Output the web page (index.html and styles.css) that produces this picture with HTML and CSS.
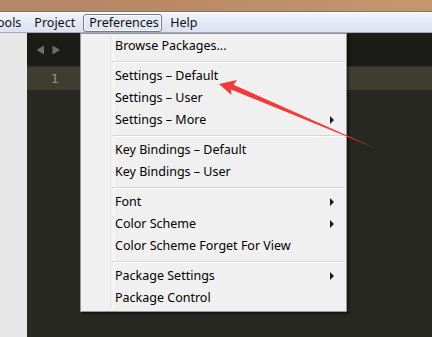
FILE: index.html
```html
<!DOCTYPE html>
<html>
<head>
<meta charset="utf-8">
<link rel="stylesheet" href="styles.css">
</head>
<body>
<div class="app">
  <div class="titlebar"></div>
  <div class="menubar">
    <span class="mitem tools">ools</span>
    <span class="mitem project">Project</span>
    <span class="mitem active">Preferences</span>
    <span class="mitem help">Help</span>
  </div>
  <div class="main">
    <div class="sidebar"></div>
    <div class="editor">
      <div class="tabbar">
        <span class="navarrows">
          <svg width="25" height="10" viewBox="0 0 25 10"><path d="M8 0.5 L0.5 5 L8 9.5 Z" fill="#6d6e67"/><path d="M16.5 0.5 L24 5 L16.5 9.5 Z" fill="#6d6e67"/></svg>
        </span>
      </div>
      <div class="linerow"><span class="lineno">1</span></div>
      <div class="rest"></div>
    </div>
  </div>

  <div class="dropdown">
    <div class="item">Browse Packages...</div>
    <div class="sep"></div>
    <div class="item">Settings – Default</div>
    <div class="item">Settings – User</div>
    <div class="item sub">Settings – More</div>
    <div class="sep"></div>
    <div class="item">Key Bindings – Default</div>
    <div class="item">Key Bindings – User</div>
    <div class="sep"></div>
    <div class="item sub">Font</div>
    <div class="item sub">Color Scheme</div>
    <div class="item">Color Scheme Forget For View</div>
    <div class="sep"></div>
    <div class="item sub">Package Settings</div>
    <div class="item">Package Control</div>
  </div>

  <svg class="annot" width="432" height="337" viewBox="0 0 432 337">
    <path d="M219 84 L237 80 L233.5 84.8 L375 148 L231 89.5 L231.5 95 Z" fill="#f23a36"/>
  </svg>
</div>
</body>
</html>
```
FILE: styles.css
```css
* { box-sizing: border-box; }
html, body { margin: 0; padding: 0; }
body {
  width: 432px;
  height: 337px;
  overflow: hidden;
  font-family: "Noto Sans", "Open Sans", sans-serif;
  font-size: 12.5px;
  color: #000;
}
.app {
  position: relative;
  width: 432px;
  height: 337px;
  display: flex;
  flex-direction: column;
}
.titlebar {
  height: 12px;
  flex: none;
  background: linear-gradient(90deg, #b4866a 0%, #b98a65 40%, #c49771 100%);
  border-bottom: 1px solid #8a6f5c;
}
.menubar {
  height: 21px;
  flex: none;
  display: flex;
  align-items: center;
  border-top: 1px solid #ffffff;
  border-bottom: 1px solid #a3a9b6;
  background: linear-gradient(180deg, #f3f5fb 0%, #e6eaf6 45%, #dbe1f0 100%);
}
.mitem {
  display: flex;
  align-items: center;
  height: 18px;
  line-height: 16px;
  font-size: 12.5px;
  color: #111;
  white-space: nowrap;
}
.mitem.tools { margin-left: -3px; }
.mitem.project { margin-left: 13px; }
.mitem.active {
  border: 1px solid #6f7f90;
  border-radius: 3px;
  background: linear-gradient(180deg, #e9edf5 0%, #dfe4ee 100%);
  box-shadow: inset 0 0 0 1px #f7f9fc;
  padding: 0 5px;
  width: 79px;
  margin-left: 8px;
}
.mitem.help { margin-left: 8px; }
.main {
  flex: 1;
  display: flex;
  min-height: 0;
}
.sidebar {
  width: 27px;
  flex: none;
  background: #e7e7e7;
}
.editor {
  flex: 1;
  display: flex;
  flex-direction: column;
  background: #272822;
}
.tabbar {
  height: 34px;
  flex: none;
  background: #1b1c17;
  border-bottom: 1px solid #2c2d27;
  display: flex;
  align-items: center;
  padding-left: 9px;
}
.navarrows { display: flex; margin-top: 1px; }
.linerow {
  height: 23px;
  flex: none;
  background: #3e3d32;
  display: flex;
  align-items: center;
}
.lineno {
  width: 32px;
  text-align: right;
  color: #8f908a;
  font-family: "DejaVu Sans", sans-serif;
  font-size: 13px;
}
.rest { flex: 1; }

.dropdown {
  position: absolute;
  left: 80px;
  top: 33px;
  width: 267px;
  height: 279px;
  background: #f0f0f0;
  border: 1px solid #979797;
  box-shadow: 2px 2px 2px rgba(0,0,0,0.45);
  padding: 1px 2px 3px 2px;
}
.dropdown::before {
  content: "";
  position: absolute;
  left: 29px;
  top: 2px;
  bottom: 2px;
  width: 2px;
  border-left: 1px solid #e2e3e3;
  border-right: 1px solid #ffffff;
}
.item {
  position: relative;
  height: 22px;
  line-height: 22px;
  padding-left: 32px;
  white-space: nowrap;
}
.item.sub::after {
  content: "";
  position: absolute;
  right: 10px;
  top: 7px;
  border-left: 4px solid #1a1a1a;
  border-top: 4px solid transparent;
  border-bottom: 4px solid transparent;
}
.sep {
  height: 8px;
  margin-left: 29px;
  position: relative;
}
.sep::after {
  content: "";
  position: absolute;
  left: 0;
  right: 0;
  top: 4px;
  height: 1px;
  background: #d7d7d7;
  border-bottom: 1px solid #ffffff;
  box-sizing: content-box;
}
.annot {
  position: absolute;
  left: 0;
  top: 0;
  pointer-events: none;
}
```
